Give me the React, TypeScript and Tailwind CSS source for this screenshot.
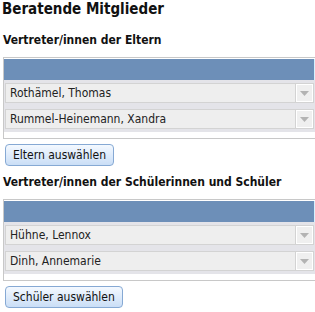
import React from "react";

const font = { fontFamily: '"DejaVu Sans Condensed", "DejaVu Sans", sans-serif' };

function Row({ name }: { name: string }) {
  return (
    <div className="flex h-[20px] w-[309px] border border-[#d3d3d3] bg-[#eeeeee]">
      <div className="flex-1 pl-[4px] text-[12px] leading-[18px] text-[#222]">{name}</div>
      <div className="flex w-[18px] items-center justify-center border-l border-[#d3d3d3] bg-[#efefef] shadow-[inset_1px_1px_0_#fff,inset_-1px_-1px_0_#fff]">
        <svg width="9" height="5" viewBox="0 0 9 5">
          <path d="M0 0h9L4.5 5z" fill="#b3b3b3" />
        </svg>
      </div>
    </div>
  );
}

function Section({ title, names, button }: { title: string; names: string[]; button: string }) {
  return (
    <div>
      <h2 className="ml-[3px] text-[12px] font-bold leading-[15px] text-[#111]">{title}</h2>
      <div className="mt-[9px] ml-[3px] w-[330px] border border-[#c8c8c8] bg-white">
        <div className="mt-[1px] flex h-[21px] bg-[#6d8fb8]">
          <div className="w-[310px]" />
          <div className="w-[2px] bg-[#d4f1ff]" />
        </div>
        <div className="flex flex-col gap-[6px] bg-[#e4e4e9] px-[1px] pt-[3px] pb-[3px]">
          {names.map((n) => (
            <Row key={n} name={n} />
          ))}
        </div>
        <div className="h-[6px]" />
      </div>
      <button className="mt-[5px] ml-[5px] h-[22px] rounded-[4px] border border-[#86a9d4] bg-gradient-to-b from-[#f4f9ff] to-[#cadef6] px-[7px] text-[12px] leading-[18px] text-[#111]">
        {button}
      </button>
    </div>
  );
}

export default function App() {
  return (
    <div className="h-[312px] w-[315px] overflow-hidden bg-white" style={font}>
      <h1 className="ml-[2px] text-[15px] font-bold leading-[18px] text-[#111]">Beratende Mitglieder</h1>
      <div className="mt-[15px]">
        <Section title="Vertreter/innen der Eltern" names={["Rothämel, Thomas", "Rummel-Heinemann, Xandra"]} button="Eltern auswählen" />
      </div>
      <div className="mt-[9px]">
        <Section
          title="Vertreter/innen der Schülerinnen und Schüler"
          names={["Hühne, Lennox", "Dinh, Annemarie"]}
          button="Schüler auswählen"
        />
      </div>
    </div>
  );
}
